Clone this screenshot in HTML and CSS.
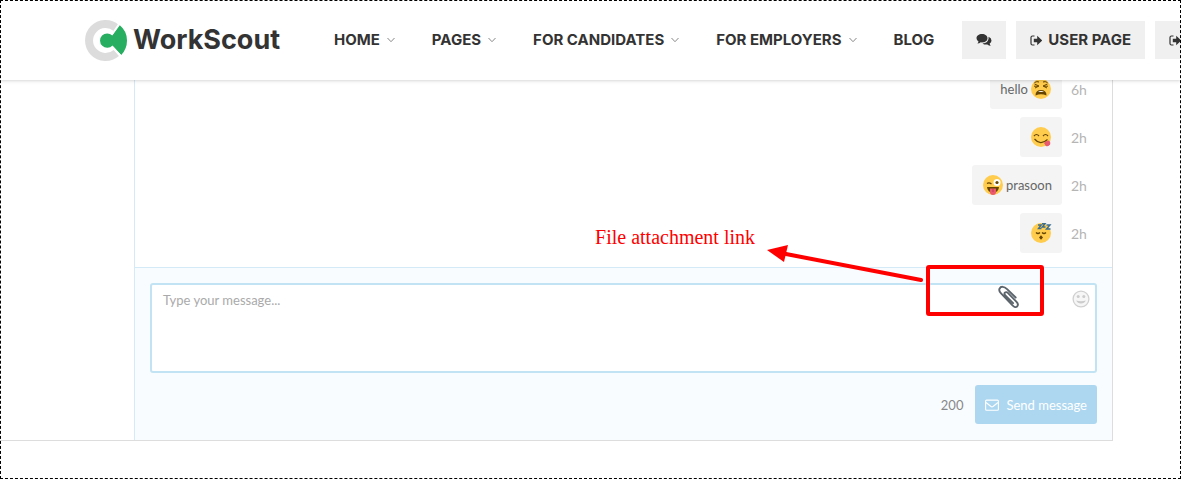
FILE: index.html
```html
<!DOCTYPE html>
<html lang="en">
<head>
<meta charset="utf-8">
<title>WorkScout – Messages</title>
<meta name="viewport" content="width=device-width, initial-scale=1">
<link rel="stylesheet" href="styles.css">
</head>
<body>
<svg class="sprite" aria-hidden="true">
  <symbol id="chevron" viewBox="0 0 8 6"><path d="M.5 1 4 4.700 7.500 1" fill="none" stroke="#888" stroke-width="1"/></symbol>
  <symbol id="exit" viewBox="0 0 12 11"><path d="M4.500 1H2.500Q1 1 1 2.500V8.500Q1 10 2.500 10H4.500" fill="none" stroke="#333" stroke-width="1.200"/><path d="M3.800 3.800H7.200V.8L12.300 5.500 7.200 10.200V7.200H3.800Z" fill="#333"/></symbol>
</svg>
<div class="page">
  <header class="header">
    <a class="logo" href="#">
      <svg class="logo-mark" viewBox="0 0 42 41" aria-hidden="true">
        <path d="M31.300 8A16.500 16.500 0 1 0 31.300 33" fill="none" stroke="#dcdcdc" stroke-width="8"/>
        <path d="M34.800 5.200Q42 11 42 20.500Q42 29 36.200 35L27.500 25.500A7.200 7.200 0 1 1 27.300 15.500Z" fill="#27ae60"/>
        <path d="M26.800 14.600 33.800 4.200M27.200 26.700 35.600 35.600" stroke="#fff" stroke-width="1.500"/>
      </svg>
      <span class="logo-text">WorkScout</span>
    </a>
    <nav class="nav">
      <a href="#">HOME <svg class="chevron"><use href="#chevron"/></svg></a>
      <a href="#">PAGES <svg class="chevron"><use href="#chevron"/></svg></a>
      <a href="#">FOR CANDIDATES <svg class="chevron"><use href="#chevron"/></svg></a>
      <a href="#">FOR EMPLOYERS <svg class="chevron"><use href="#chevron"/></svg></a>
      <a href="#">BLOG</a>
    </nav>
    <div class="actions">
      <a class="action" href="#" aria-label="Messages">
        <svg class="icon-chat" viewBox="0 0 15 12" aria-hidden="true"><path d="M5.500 0C8.600 0 11 1.800 11 4.200S8.600 8.400 5.500 8.400L4.300 8.300Q2.800 9.500.9 9.600Q1.900 8.700 2 7.500Q0 6.200 0 4.200C0 1.800 2.400 0 5.500 0ZM12 2.800Q15 4 15 6.500Q15 8.400 13.200 9.600Q13.300 10.800 14.300 11.800Q12.300 11.700 10.800 10.500Q8 11 6 9.400Q11.800 9 12.100 4.200Z" fill="#333"/></svg>
      </a>
      <a class="action" href="#"><svg class="icon-exit" aria-hidden="true"><use href="#exit"/></svg>USER PAGE</a>
      <a class="action" href="#" aria-label="Log out"><svg class="icon-exit" aria-hidden="true"><use href="#exit"/></svg></a>
    </div>
  </header>

  <div class="messenger">
    <aside class="contacts"></aside>
    <main class="chat">
      <div class="thread">
        <div class="message">
          <p class="bubble">hello
            <svg class="emoji" viewBox="0 0 20 20" role="img" aria-label="tired face"><circle cx="10" cy="10" r="10" fill="#ffcc4d"/><path d="M3.500 5 8 7 4 9M16.500 5 12 7 16 9M3.500 3.500Q6 2 8 3M16.500 3.500Q14 2 12 3M3 7.200H7M13 7.200H17" fill="none" stroke="#664500" stroke-width="1"/><path d="M4.500 16.500Q4.500 11 10 11T15.500 16.500Q10 14 4.500 16.500Z" fill="#664500"/><path d="M7 13Q10 10.800 13 13Z" fill="#fff"/></svg>
          </p><time>6h</time>
        </div>
        <div class="message">
          <p class="bubble">
            <svg class="emoji" viewBox="0 0 20 20" role="img" aria-label="face savouring food"><circle cx="10" cy="10" r="10" fill="#ffcc4d"/><path d="M3 9Q5.500 6 8 9M12 9Q14.500 6 17 9M3.500 12Q9.500 19 16.500 12.500" fill="none" stroke="#664500" stroke-width="1.200"/><path d="M13 16Q15 13.500 17.500 13.500Q20 14.500 19 17.500Q17.500 20 14.800 18.900Z" fill="#e75a70"/></svg>
          </p><time>2h</time>
        </div>
        <div class="message">
          <p class="bubble">
            <svg class="emoji" viewBox="0 0 20 20" role="img" aria-label="winking face with tongue"><circle cx="10" cy="10" r="10" fill="#ffcc4d"/><path d="M4 8.500Q6 7 8.500 9" fill="none" stroke="#664500" stroke-width="1.200"/><circle cx="14" cy="7.500" r="3.500" fill="#fff"/><circle cx="14" cy="7.500" r="1.600" fill="#664500"/><path d="M4 12H16Q15.500 17.500 10 17.500T4 12Z" fill="#664500"/><path d="M7 13.500H13V17Q13 20 10 20T7 17Z" fill="#ea596e"/><path d="M10 14V17" stroke="#bd3a50"/></svg>
            prasoon</p><time>2h</time>
        </div>
        <div class="message">
          <p class="bubble">
            <svg class="emoji" viewBox="0 0 20 20" role="img" aria-label="sleeping face"><circle cx="10" cy="10" r="10" fill="#ffcc4d"/><path d="M5 9.500Q7 11.500 9 9.500M11 9.500Q13 11.500 15 9.500" fill="none" stroke="#664500" stroke-width="1.200"/><path d="M10 12.200 12 14.500 10 16.800 8 14.500Z" fill="#664500"/><path d="M7 2H10.200L7.500 5.500H10.500M11 .8H14L11.300 4H14.500M15.500 2H19L15.500 6H19.500" fill="none" stroke="#3b6e91" stroke-width="1.400"/></svg>
          </p><time>2h</time>
        </div>
      </div>

      <form class="composer">
        <div class="field">
          <textarea aria-label="Message" placeholder="Type your message..."></textarea>
          <div class="field-tools">
            <button class="tool" type="button" aria-label="Attach a file">
              <svg class="icon-clip" viewBox="0 0 22 24"><path d="M18.500 12 9.500 3.200C6.500.3 3-.1 1.600 2.800C.7 4.800 1.700 6.200 3.200 7.700L15.200 20.300C17 22.200 18.800 22.700 20.100 21.300C21.400 19.800 20.900 18 19.200 16.300L10.300 7.200C9.300 6.200 8 6 7.200 6.900C6.400 7.800 6.800 8.900 7.900 10L15.800 17.900" fill="none" stroke="#5c646c" stroke-width="2" stroke-linecap="round"/></svg>
            </button>
            <button class="tool" type="button" aria-label="Insert emoji">
              <svg class="icon-smile" viewBox="0 0 18 18"><circle cx="9" cy="9" r="7.900" fill="#f6f6f6" stroke="#d0d0d0" stroke-width="1.300"/><circle cx="6.200" cy="6.500" r="1.500" fill="#ccc"/><circle cx="11.800" cy="6.500" r="1.500" fill="#ccc"/><path d="M4.200 10.500Q9 12 13.800 10.500Q12.500 13.500 9 13.500T4.200 10.500Z" fill="#ccc"/></svg>
            </button>
          </div>
        </div>
        <div class="composer-footer">
          <span class="counter">200</span>
          <button class="send" type="button">
            <svg class="icon-mail" viewBox="0 0 14 12" aria-hidden="true"><rect x=".6" y="1.100" width="12.800" height="10.200" rx="1" fill="none" stroke="#fff" stroke-width="1.100"/><path d="M1 3.500 6 7.500Q7 8.200 8 7.500L13 3.500" fill="none" stroke="#fff" stroke-width="1.100"/></svg>
            Send message
          </button>
        </div>
      </form>
    </main>
  </div>

  <div class="note">File attachment link</div>
  <svg class="pointer" viewBox="0 0 278 74" aria-hidden="true">
    <path d="M20 14 155 40" stroke="#f00" stroke-width="4" stroke-linecap="round"/>
    <path d="M1 10 22 5 18 22Z" fill="#f00"/>
    <rect x="162" y="27" width="114" height="47" rx="1" fill="none" stroke="#f00" stroke-width="4"/>
  </svg>
  <div class="frame"></div>
</div>
</body>
</html>
```
FILE: styles.css
```css
* {
  box-sizing: border-box;
}

body {
  margin: 0;
  background: #fff;
  color: #666;
  font: 13px/24px Lato, "Open Sans", sans-serif;
}

a {
  color: #333;
  text-decoration: none;
}

button,
textarea {
  font: inherit;
}

svg {
  display: block;
  flex: none;
  overflow: visible;
}

.sprite {
  position: absolute;
  width: 0;
  height: 0;
}

.page {
  position: relative;
  display: flex;
  flex-direction: column;
  min-height: 100vh;
  padding-bottom: 38px;
  overflow: hidden;
}

.header {
  position: relative;
  z-index: 1;
  display: flex;
  align-items: center;
  height: 80px;
  padding-left: 85px;
  background: #fff;
  box-shadow: 0 0 4px rgba(0, 0, 0, 0.25);
  font: 700 15px/20px Inter, "Open Sans", sans-serif;
  white-space: nowrap;
}

.logo {
  display: flex;
  align-items: center;
  gap: 6px;
  width: 249px;
  flex: none;
}

.logo-mark {
  width: 42px;
  height: 41px;
}

.logo-text {
  font: 700 27px/40px Inter, Lato, sans-serif;
}

.nav {
  display: flex;
  gap: 37px;
}

.nav a {
  display: flex;
  align-items: center;
  gap: 7px;
}

.chevron {
  width: 8px;
  height: 6px;
}

.actions {
  display: flex;
  gap: 10px;
  margin-left: 28px;
}

.action {
  display: flex;
  align-items: center;
  gap: 6px;
  height: 38px;
  padding: 0 14px;
  background: #f0f0f0;
}

.icon-chat {
  width: 16px;
  height: 12px;
}

.icon-exit {
  width: 12px;
  height: 11px;
}

.messenger {
  display: flex;
  flex: 1;
  margin-right: 68px;
  border: solid #ddd;
  border-width: 0 1px 1px 0;
}

.contacts {
  width: 134px;
  flex: none;
}

.chat {
  display: flex;
  flex: 1;
  flex-direction: column;
  border-left: 1px solid #d4ebf7;
}

.thread {
  display: flex;
  flex: 1 0 0;
  flex-direction: column;
  justify-content: flex-end;
  gap: 8px;
  padding: 0 25px 14px;
  overflow: hidden;
}

.message {
  display: flex;
  flex: none;
  align-items: center;
  justify-content: flex-end;
  gap: 9px;
}

.message time {
  width: 16px;
  padding-top: 2px;
  color: #b5b5b5;
  font-size: 14px;
}

.bubble {
  display: flex;
  align-items: center;
  gap: 2px;
  height: 40px;
  margin: 0;
  padding: 0 10px;
  border-radius: 3px;
  background: #f4f4f4;
}

.emoji {
  width: 20px;
  height: 20px;
  margin: 0 1px;
}

.composer {
  padding: 15px 15px 16px;
  border-top: 1px solid #d4ebf7;
  background: #f8fcff;
}

.field {
  display: flex;
  height: 90px;
  border: 2px solid #c2e3f3;
  border-radius: 3px;
  background: #fff;
}

.field textarea {
  flex: 1;
  min-width: 0;
  padding: 3px 11px;
  border: 0;
  background: transparent;
  color: #666;
  resize: none;
}

.field textarea::placeholder {
  color: #aaa;
}

.field-tools {
  display: flex;
  align-items: flex-start;
  gap: 53px;
  padding: 1px 5px;
}

.tool {
  padding: 0;
  border: 0;
  background: none;
}

.icon-clip {
  width: 21px;
  height: 23px;
}

.icon-smile {
  width: 18px;
  height: 18px;
  margin-top: 4px;
}

.composer-footer {
  display: flex;
  align-items: center;
  justify-content: flex-end;
  gap: 12px;
  margin-top: 12px;
}

.counter {
  color: #888;
}

.send {
  display: flex;
  align-items: center;
  gap: 7px;
  height: 39px;
  padding: 0 10px;
  border: 0;
  border-radius: 3px;
  background: #add7f0;
  color: #fff;
}

.icon-mail {
  width: 14px;
  height: 12px;
}

.note {
  position: absolute;
  z-index: 2;
  top: 225px;
  right: 426px;
  color: #f00;
  font: 20px/24px "Liberation Serif", serif;
}

.pointer {
  position: absolute;
  z-index: 2;
  top: 240px;
  right: 137px;
  width: 278px;
  height: 74px;
}

.frame {
  position: absolute;
  z-index: 3;
  inset: 0;
  border: 1px dashed #000;
  pointer-events: none;
}
```
